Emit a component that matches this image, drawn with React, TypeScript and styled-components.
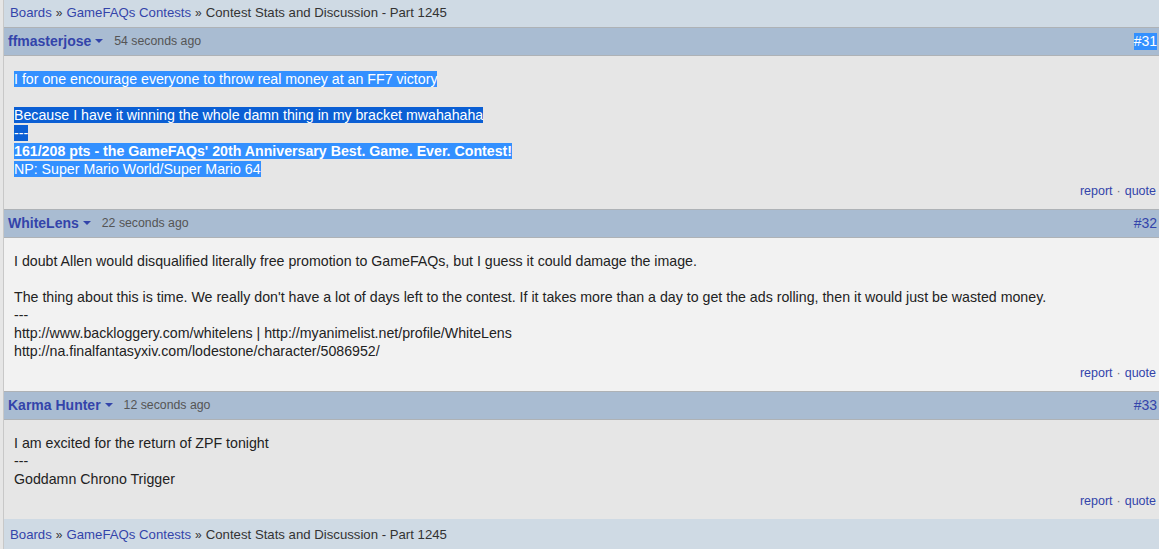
import React from "react";
import styled, { createGlobalStyle } from "styled-components";

const Global = createGlobalStyle`
  html, body { margin: 0; padding: 0; background: #e6e6e6; }
  body { font-family: "Liberation Sans", Arial, sans-serif; font-size: 14px; color: #222; overflow: hidden; }
`;

const Page = styled.div`
  margin-left: 3px;
  border-left: 1px solid #c8c8c8;
  display: flex;
  flex-direction: column;
`;

const Crumbs = styled.div<{ $top?: boolean }>`
  background: #cfdae4;
  padding: ${(p) => (p.$top ? "4px 6px 5px" : "7px 6px 6px")};
  line-height: 17px;
  font-size: 13.2px;
  color: #333;
  ${(p) => (p.$top ? "" : "height: 30px;")}
`;

const CrumbLink = styled.a`
  color: #3344aa;
  text-decoration: none;
`;

const Sep = styled.span`
  color: #333;
  margin: 0 4px;
  font-size: 12px;
`;

const Header = styled.div`
  display: flex;
  align-items: center;
  background: #a9bcd2;
  border-top: 1px solid #aeb2b6;
  border-bottom: 1px solid #aeb2b6;
  padding: 5px 2px 5px 4px;
  height: 17px;
  line-height: 17px;
`;

const User = styled.a`
  font-weight: bold;
  color: #3344aa;
  text-decoration: none;
  font-size: 14px;
`;

const Caret = styled.span`
  display: inline-block;
  width: 0;
  height: 0;
  border-left: 4px solid transparent;
  border-right: 4px solid transparent;
  border-top: 4px solid #3344aa;
  margin: 0 11px 2px 4px;
`;

const Time = styled.span`
  color: #555;
  font-size: 12.3px;
`;

const Num = styled.a<{ $sel?: boolean }>`
  margin-left: auto;
  color: ${(p) => (p.$sel ? "#fff" : "#3344aa")};
  background: ${(p) => (p.$sel ? "#3390ff" : "transparent")};
  text-decoration: none;
  font-size: 14px;
`;

const Body = styled.div<{ $alt?: boolean }>`
  background: ${(p) => (p.$alt ? "#f2f2f2" : "#e6e6e6")};
  padding: 14px 3px 10px 10px;
  display: flex;
  flex-direction: column;
`;

const Msg = styled.div`
  line-height: 18px;
  font-size: 14.2px;
  color: #222;
`;

const Sel = styled.span<{ $dark?: boolean }>`
  background: ${(p) => (p.$dark ? "#0b5fd4" : "#3390ff")};
  color: #fff;
`;

const Foot = styled.div`
  margin-top: 5px;
  text-align: right;
  font-size: 12.5px;
  line-height: 16px;
  color: #666;
`;

const FootLink = styled.a`
  color: #3344aa;
  text-decoration: none;
`;

const Dot = styled.span`
  margin: 0 4px;
  color: #777;
`;

function Breadcrumb({ top }: { top?: boolean }) {
  return (
    <Crumbs $top={top}>
      <CrumbLink>Boards</CrumbLink>
      <Sep>»</Sep>
      <CrumbLink>GameFAQs Contests</CrumbLink>
      <Sep>»</Sep>
      Contest Stats and Discussion - Part 1245
    </Crumbs>
  );
}

function PostHead({ user, time, num, sel }: { user: string; time: string; num: string; sel?: boolean }) {
  return (
    <Header>
      <User>{user}</User>
      <Caret />
      <Time>{time}</Time>
      <Num $sel={sel}>{num}</Num>
    </Header>
  );
}

function Footer() {
  return (
    <Foot>
      <FootLink>report</FootLink>
      <Dot>·</Dot>
      <FootLink>quote</FootLink>
    </Foot>
  );
}

export default function App() {
  return (
    <>
      <Global />
      <Page>
        <Breadcrumb top />
        <PostHead user="ffmasterjose" time="54 seconds ago" num="#31" sel />
        <Body>
          <Msg>
            <Sel>I for one encourage everyone to throw real money at an FF7 victory </Sel>
            <br />
            <br />
            <Sel $dark>Because I have it winning the whole damn thing in my bracket mwahahaha </Sel>
            <br />
            <Sel $dark>---</Sel>
            <br />
            <Sel>
              <b>161/208 pts - the GameFAQs' 20th Anniversary Best. Game. Ever. Contest! </b>
            </Sel>
            <br />
            <Sel>NP: Super Mario World/Super Mario 64</Sel>
          </Msg>
          <Footer />
        </Body>
        <PostHead user="WhiteLens" time="22 seconds ago" num="#32" />
        <Body $alt>
          <Msg>
            I doubt Allen would disqualified literally free promotion to GameFAQs, but I guess it could damage the image.
            <br />
            <br />
            The thing about this is time. We really don't have a lot of days left to the contest. If it takes more than a day to get the ads rolling, then it would just be wasted money.
            <br />
            ---
            <br />
            http://www.backloggery.com/whitelens | http://myanimelist.net/profile/WhiteLens
            <br />
            http://na.finalfantasyxiv.com/lodestone/character/5086952/
          </Msg>
          <Footer />
        </Body>
        <PostHead user="Karma Hunter" time="12 seconds ago" num="#33" />
        <Body>
          <Msg>
            I am excited for the return of ZPF tonight
            <br />
            ---
            <br />
            Goddamn Chrono Trigger
          </Msg>
          <Footer />
        </Body>
        <Breadcrumb />
      </Page>
    </>
  );
}
